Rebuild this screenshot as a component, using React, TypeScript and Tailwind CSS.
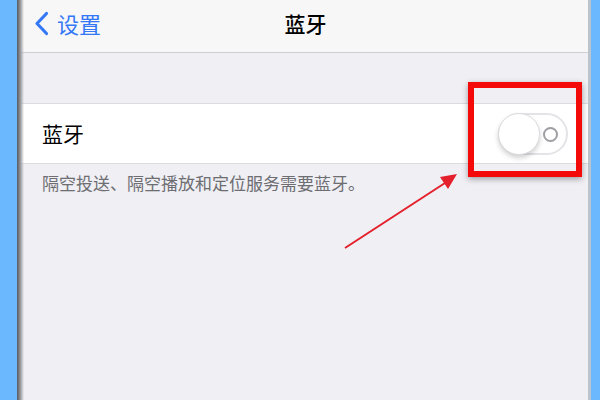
function Toggle() {
  return (
    <div className="relative w-[70px] h-[42px] rounded-full border-2 border-[#e4e4e8] bg-white">
      {/* knob */}
      <div className="absolute left-[-2px] top-[-2px] w-[42px] h-[42px] rounded-full bg-white border border-[#dcdce0] shadow-[0_3px_5px_rgba(0,0,0,0.18)]" />
      {/* "off" label ring */}
      <div className="absolute right-[8px] top-[12px] w-[15px] h-[15px] rounded-full border-2 border-[#9e9ea3]" />
    </div>
  );
}

function App() {
  return (
    <div
      className="w-[600px] h-[400px] flex bg-[#6cb8ff] overflow-hidden"
      style={{ fontFamily: '"Noto Sans CJK SC", "Noto Sans", sans-serif' }}
    >
      <div className="w-[17px] bg-[#6cb8ff]" />

      {/* phone screen */}
      <div className="relative flex-1 flex flex-col bg-[#efeff4]">

        {/* Nav bar */}
        <div className="h-[53px] flex items-center bg-[#f7f7f8] border-b border-[#cfcfd3] relative">
          <div className="flex items-center pl-[17px] gap-[8px] text-[#3478f6] -mt-[6px]">
            <svg width="15" height="25" viewBox="0 0 15 25" fill="none">
              <path d="M12.5 2.5 L3 12.5 L12.5 22.5" stroke="#3478f6" strokeWidth="3.2" strokeLinecap="round" strokeLinejoin="round" />
            </svg>
            <span className="text-[22px] leading-none">设置</span>
          </div>
          <div className="absolute left-0 right-0 -mt-[6px] text-center text-[21px] font-medium text-black leading-none pl-[6px]">
            蓝牙
          </div>
        </div>

        {/* spacer */}
        <div className="h-[50px]" />

        {/* Bluetooth row */}
        <div className="h-[61px] bg-white border-y border-[#dcdce0] flex items-center justify-between pl-[25px] pr-[20px]">
          <span className="text-[21px] text-black leading-none">蓝牙</span>
          <Toggle />
        </div>

        {/* footer text */}
        <div className="pl-[25px] pt-[10px] text-[17px] text-[#6d6d72] leading-none">
          隔空投送、隔空播放和定位服务需要蓝牙。
        </div>

        {/* left edge shadow */}
        <div className="absolute left-0 top-0 bottom-0 w-[7px] bg-gradient-to-r from-[#55585c] via-[#9a9ca0] to-transparent" />

        {/* red highlight box */}
        <div className="absolute left-[451px] top-[82px] w-[114px] h-[95px] border-[6px] border-[#f50a0a] shadow-[0_2px_6px_rgba(0,0,0,0.35)]" />

        {/* arrow */}
        <svg className="absolute left-0 top-0" width="571" height="400" viewBox="0 0 571 400">
          <line x1="328" y1="248" x2="428" y2="183" stroke="#e3202b" strokeWidth="2" />
          <polygon points="440,174 423,177 431,189" fill="#e3202b" />
        </svg>
      </div>

      <div className="w-[3px] bg-[#b9c4cc]" />
      <div className="w-[9px] bg-[#6cb8ff]" />
    </div>
  );
}

export default App;
